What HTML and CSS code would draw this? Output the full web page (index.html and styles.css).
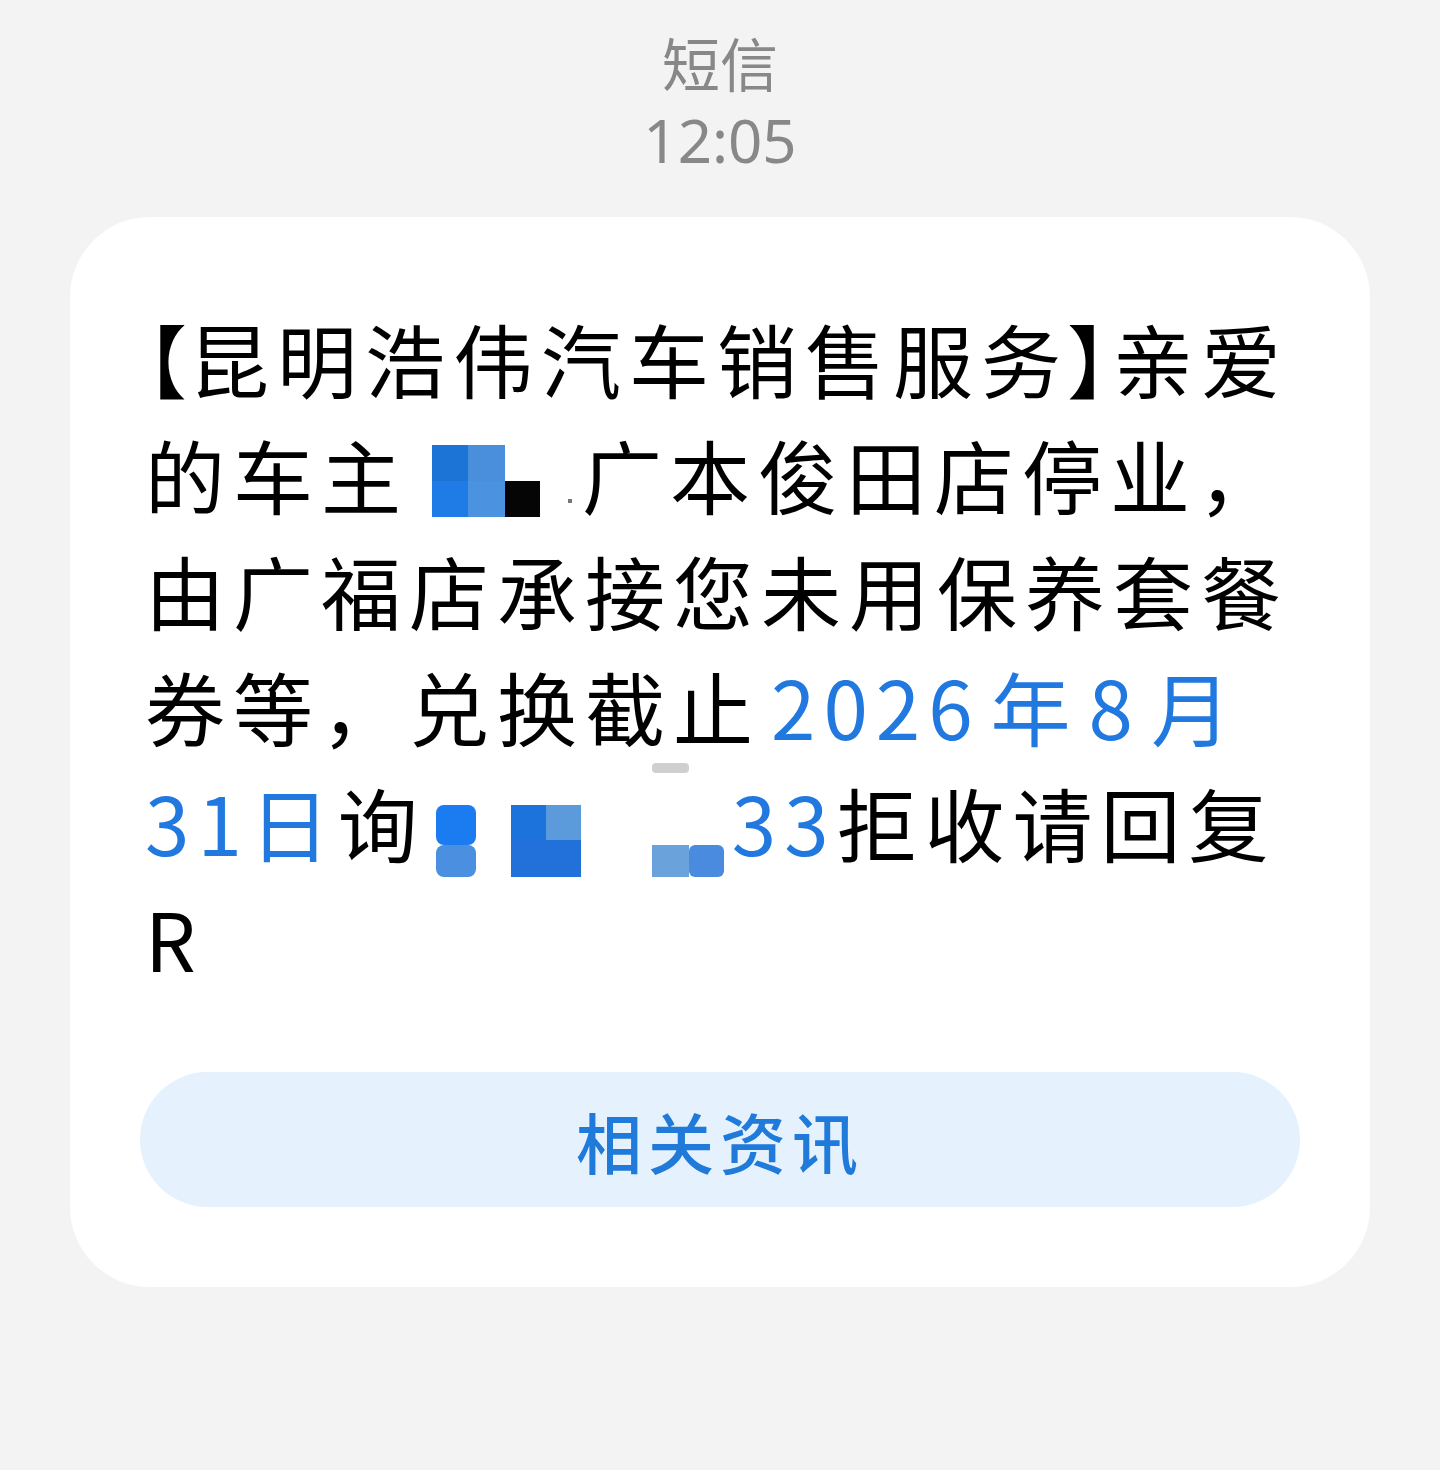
FILE: index.html
```html
<!DOCTYPE html>
<html lang="zh-CN">
<head>
    <meta charset="UTF-8">
    <meta name="viewport" content="width=device-width, initial-scale=1.0">
    <title>短信</title>
    <link rel="stylesheet" href="styles.css">
</head>
<body>
    <div class="header">
        <div class="sender">短信</div>
        <div class="time">12:05</div>
    </div>

    <div class="message-card">
        <p class="message-text"><span class="half">【</span>昆明浩伟汽车销售服务<span class="half">】</span>亲爱<br>的车主<svg class="redact redact-name" width="173" height="116" viewBox="0 0 173 116">
                <rect x="23" y="30" width="36" height="36" fill="#1b74d6"/>
                <rect x="23" y="66" width="36" height="36" fill="#1f7be6"/>
                <rect x="59" y="30" width="37" height="36" fill="#4a8fdc"/>
                <rect x="59" y="66" width="37" height="36" fill="#4b93e0"/>
                <rect x="96" y="66" width="35" height="36" fill="#050505"/>
                <rect x="159" y="84" width="4" height="4" fill="#777"/>
            </svg>广本俊田店停业，<br>由广福店承接您未用保养套餐<br>券等，兑换截止<span class="link"><span class="num">2026</span>年<span class="num">8</span>月</span><br><span class="link">31日</span>询<svg class="redact redact-phone" width="306" height="116" viewBox="0 0 306 116">
                <rect x="10" y="42" width="40" height="40" rx="8" fill="#1a7cf0"/>
                <rect x="10" y="82" width="40" height="32" rx="8" fill="#4a8fe0"/>
                <rect x="85" y="42" width="35" height="35" fill="#1d73dc"/>
                <rect x="120" y="42" width="35" height="35" fill="#5b9bdb"/>
                <rect x="85" y="77" width="70" height="37" fill="#2270d9"/>
                <rect x="226" y="0" width="37" height="10" rx="4" fill="#cfcfcf"/>
                <rect x="226" y="82" width="37" height="32" fill="#6aa2dc"/>
                <rect x="263" y="82" width="35" height="32" rx="6" fill="#4a8be0"/>
            </svg><span class="link">33</span>拒收请回复<br>R</p>

        <button type="button" class="related-btn">相关资讯</button>
    </div>
</body>
</html>
```

FILE: styles.css
```css
body {
    margin: 0;
    background-color: #f3f3f3;
    font-family: "Noto Sans CJK SC", "Noto Sans", sans-serif;
}

.header {
    padding-top: 23px;
    text-align: center;
    color: #888888;
}

.sender {
    font-size: 58px;
    line-height: 78px;
}

.time {
    font-family: "Noto Sans", "Noto Sans CJK SC", sans-serif;
    font-size: 60px;
    line-height: 78px;
}

.message-card {
    background-color: #ffffff;
    margin: 38px 70px 0;
    padding: 82px 70px 80px;
    border-radius: 80px;
}

.message-text {
    margin: 0;
    padding-left: 5px;
    font-size: 80px;
    line-height: 116px;
    letter-spacing: 8px;
    color: #000000;
}

.half {
    font-feature-settings: "palt";
    letter-spacing: 4px;
}

.link {
    color: #2179e0;
}

.num {
    margin: 0 10px;
}

.redact {
    vertical-align: top;
}

.related-btn {
    display: block;
    width: 100%;
    height: 135px;
    margin-top: 77px;
    border: none;
    border-radius: 68px;
    background-color: #e5f1fd;
    color: #1f7ad9;
    font-family: "Noto Sans CJK SC", sans-serif;
    font-size: 66px;
    font-weight: 500;
    letter-spacing: 6px;
    cursor: pointer;
}
```
